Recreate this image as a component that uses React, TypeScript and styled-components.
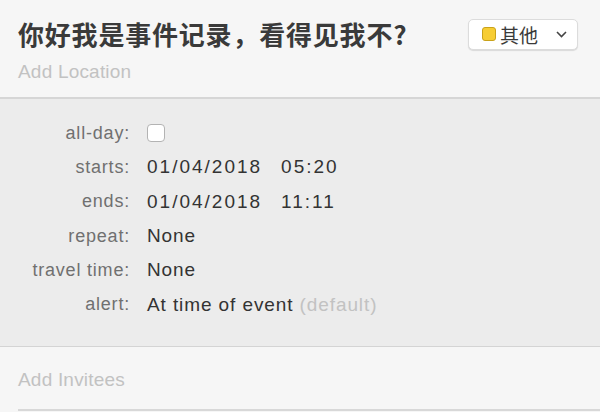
import React from "react";
import styled, { createGlobalStyle } from "styled-components";

const GlobalStyle = createGlobalStyle`
  html, body {
    margin: 0;
    padding: 0;
    background: #f6f6f6;
  }
  body {
    font-family: "Liberation Sans", "Noto Sans CJK SC", sans-serif;
    -webkit-font-smoothing: antialiased;
  }
`;

const Window = styled.div`
  width: 600px;
  height: 412px;
  overflow: hidden;
  background: #f6f6f6;
  display: flex;
  flex-direction: column;
`;

const Header = styled.div`
  height: 99px;
  flex-shrink: 0;
  box-sizing: border-box;
  padding: 18px 22px 0 18px;
  border-bottom: 2px solid #d6d6d6;
`;

const TitleRow = styled.div`
  display: flex;
  align-items: center;
  justify-content: space-between;
  height: 32px;
`;

const Title = styled.h1`
  margin: 0;
  font-family: "Noto Sans CJK SC", sans-serif;
  font-size: 26px;
  line-height: 32px;
  font-weight: 700;
  color: #3a3a3a;
  letter-spacing: 0.8px;
`;

const Placeholder = styled.div<{ $top?: number }>`
  margin-top: ${(p) => p.$top ?? 0}px;
  font-size: 19px;
  color: #c2c2c2;
  letter-spacing: 0.2px;
`;

const CalendarPicker = styled.button`
  width: 110px;
  height: 31px;
  box-sizing: border-box;
  display: flex;
  align-items: center;
  padding: 0 10px 0 13px;
  border: 1px solid #dcdcdc;
  border-radius: 5px;
  background: #fff;
  box-shadow: 0 1px 1px rgba(0, 0, 0, 0.12);
  font-family: "Noto Sans CJK SC", sans-serif;
  font-size: 19px;
  color: #3a3a3a;
`;

const Swatch = styled.span<{ $color: string }>`
  width: 12px;
  height: 12px;
  border-radius: 3px;
  background: ${(p) => p.$color};
  border: 1px solid #c9a21a;
  margin-right: 4px;
`;

const Chevron = styled.svg`
  margin-left: auto;
`;

const Details = styled.div`
  height: 248px;
  flex-shrink: 0;
  box-sizing: border-box;
  background: #ececec;
  border-bottom: 1px solid #d4d4d4;
  padding-top: 17px;
  display: flex;
  flex-direction: column;
`;

const Row = styled.div`
  display: grid;
  grid-template-columns: 130px auto;
  column-gap: 17px;
  align-items: center;
  height: 34.3px;
`;

const Label = styled.span`
  text-align: right;
  font-size: 18px;
  color: #707070;
  letter-spacing: 0.8px;
  white-space: nowrap;
`;

const Value = styled.span`
  font-size: 19px;
  color: #333;
  letter-spacing: 0.9px;
  white-space: nowrap;
`;

const DateTime = styled.span`
  display: flex;
  gap: 19px;
  font-size: 19px;
  color: #333;
  letter-spacing: 2px;
`;

const Muted = styled.span`
  color: #c2c2c2;
`;

const Checkbox = styled.span`
  width: 18px;
  height: 18px;
  box-sizing: border-box;
  border: 1px solid #b3b3b3;
  border-radius: 4px;
  background: #fff;
`;

const Footer = styled.div`
  flex: 1;
  padding: 22px 0 0 18px;
  display: flex;
  flex-direction: column;
`;

const Rule = styled.div`
  margin-top: 18px;
  height: 2px;
  background: #d8d8d8;
`;

const rows: { label: string; value: React.ReactNode }[] = [
  { label: "all-day:", value: <Checkbox /> },
  {
    label: "starts:",
    value: (
      <DateTime>
        <span>01/04/2018</span>
        <span>05:20</span>
      </DateTime>
    ),
  },
  {
    label: "ends:",
    value: (
      <DateTime>
        <span>01/04/2018</span>
        <span>11:11</span>
      </DateTime>
    ),
  },
  { label: "repeat:", value: <Value>None</Value> },
  { label: "travel time:", value: <Value>None</Value> },
  {
    label: "alert:",
    value: (
      <Value>
        At time of event <Muted>(default)</Muted>
      </Value>
    ),
  },
];

const App = () => {
  return (
    <Window>
      <GlobalStyle />
      <Header>
        <TitleRow>
          <Title>你好我是事件记录，看得见我不?</Title>
          <CalendarPicker>
            <Swatch $color="#f7cd33" />
            其他
            <Chevron width="11" height="7" viewBox="0 0 11 7">
              <path d="M1 1l4.5 4.5L10 1" fill="none" stroke="#444" strokeWidth="1.6" />
            </Chevron>
          </CalendarPicker>
        </TitleRow>
        <Placeholder $top={11}>Add Location</Placeholder>
      </Header>
      <Details>
        {rows.map((r) => (
          <Row key={r.label}>
            <Label>{r.label}</Label>
            {r.value}
          </Row>
        ))}
      </Details>
      <Footer>
        <Placeholder>Add Invitees</Placeholder>
        <Rule />
      </Footer>
    </Window>
  );
};

export default App;
